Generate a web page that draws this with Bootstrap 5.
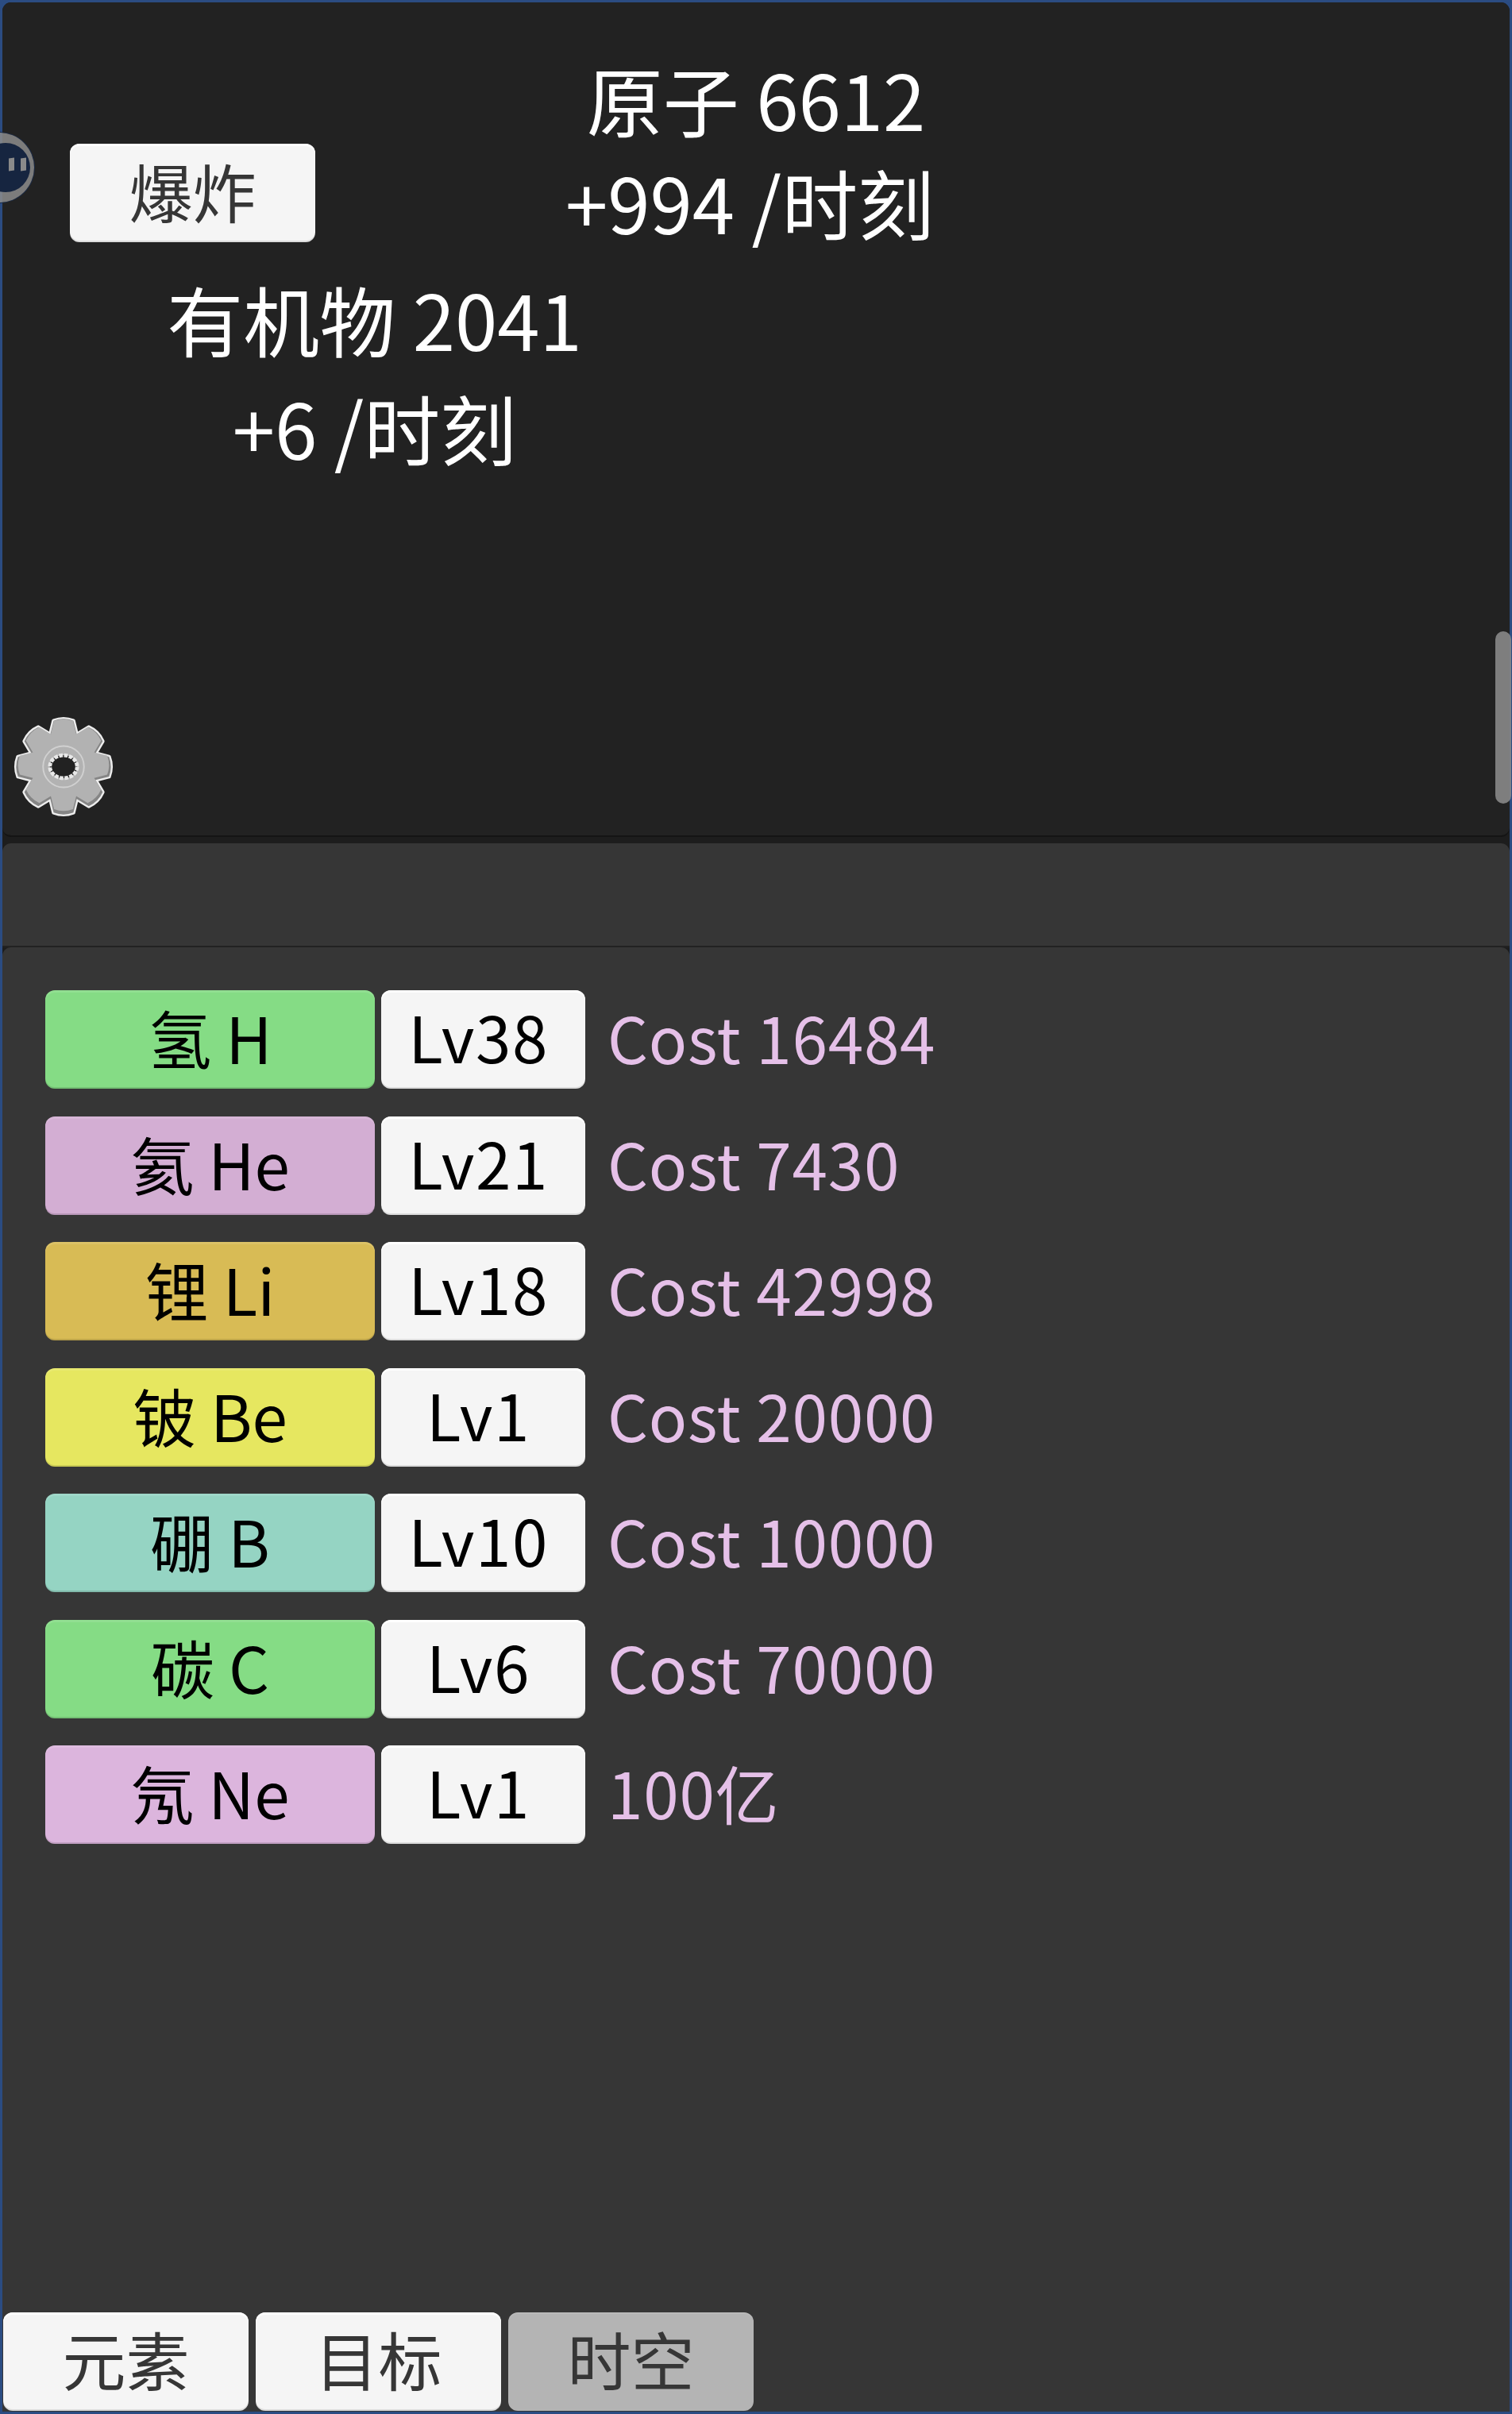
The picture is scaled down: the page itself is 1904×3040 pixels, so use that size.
<!DOCTYPE html>
<html lang="zh">
<head>
<meta charset="utf-8">
<title>原子</title>
<link href="https://cdn.jsdelivr.net/npm/bootstrap@5.3.0/dist/css/bootstrap.min.css" rel="stylesheet">
<style>
html,body{margin:0;height:3040px;overflow:hidden}
body{background:#2b4c82;font-family:"Noto Sans CJK SC","Noto Sans",sans-serif;color:#fff}
.shell{height:3040px;background:#1d1d1d;border:3px solid #2b4c82;border-radius:14px 14px 0 0;position:relative}
.stage{height:1051px;background:#222;border-radius:11px;border-bottom:2px solid #141414;position:relative}
.stage-row{display:flex;padding-top:56px}
.stage-left{width:937px;flex:none}
.stage-right{width:480px;flex:none;margin-left:-228px}
.stat{font-size:96px;line-height:130px;text-align:center;white-space:nowrap}
.stage-left .stat{line-height:137px}
.stage-right .stat-rate{padding-right:20px}
.ui-btn{font-size:80px;line-height:1;padding:0 0 8px;border:0;border-radius:12px;color:#363636;background:#f5f5f5;box-shadow:inset 0 3px 0 rgba(255,255,255,.85),inset 0 -2px 0 rgba(0,0,0,.1);display:flex;align-items:center;justify-content:center;flex:none}
.ui-btn:hover,.ui-btn:active{color:#363636;background:#f5f5f5}
.burst{width:309px;height:124px;margin:122px 0 27px 85px}
.blank{height:131px;margin-top:8px;background:#363636;border-radius:11px 11px 0 0;border-bottom:2px solid #222}
.main-panel{height:1844px;background:#363636;border-radius:11px 11px 0 0;position:relative;padding:54px 0 0 54px}
.el-row{display:flex;align-items:center;height:124px;margin-bottom:34.5px}
.el-name{width:415px;height:124px;box-shadow:inset 0 3px 0 rgba(255,255,255,.1),inset 0 -2px 0 rgba(0,0,0,.12)}
.el-name,.el-name:hover,.el-name:active,.el-lv,.el-lv:hover,.el-lv:active{color:#000}
.el-lv{width:257px;height:124px;margin-left:8px;padding-right:12px;padding-bottom:10px;letter-spacing:1.5px}
.el-cost{margin-left:28px;font-size:80px;line-height:116px;height:124px;color:#e5c0e8;white-space:nowrap;letter-spacing:.8px}
.c-green,.c-green:hover,.c-green:active{background:#85dc85}
.c-he,.c-he:hover,.c-he:active{background:#d3aed3}
.c-li,.c-li:hover,.c-li:active{background:#d8bb55}
.c-be,.c-be:hover,.c-be:active{background:#e6e760}
.c-b,.c-b:hover,.c-b:active{background:#95d4c3}
.c-ne,.c-ne:hover,.c-ne:active{background:#dcb5dd}
.tabbar{position:absolute;left:1px;bottom:1px;display:flex;gap:9px}
.tab-btn{width:309px;height:124px;padding-bottom:10px}
.tab-btn.off,.tab-btn.off:hover{background:#b4b4b4;box-shadow:inset 0 2px 0 rgba(255,255,255,.08);color:#363636}
.float-ball{position:absolute;left:-48px;top:164px;width:88px;height:88px;border-radius:50%;background:rgba(140,140,140,.85);box-shadow:0 0 0 1px #1a2a45;display:flex;align-items:center;justify-content:center;z-index:3}
.float-core{width:62px;height:62px;border-radius:50%;background:#162540;margin-left:15px;display:flex;align-items:center;justify-content:center;gap:8px;padding:0 0 8px 30px}
.float-core i{display:block;width:7px;height:16px;background:#8a8a8a;flex:none;transform:skewY(-8deg)}
.gear{position:absolute;left:14px;top:897px;width:126px;height:131px;display:block}
.thumb{position:absolute;right:-2px;top:792px;width:20px;height:217px;border-radius:10px;background:rgba(136,136,136,.9);z-index:3}
</style>
</head>
<body>
<div class="shell">
  <div class="stage">
    <div class="float-ball"><div class="float-core"><i></i><i></i></div></div>
    <div class="stage-row">
      <div class="stage-left">
        <button class="btn ui-btn burst" type="button">爆炸</button>
        <div class="stat">有机物 2041</div>
        <div class="stat">+6 /时刻</div>
      </div>
      <div class="stage-right">
        <div class="stat">原子 6612</div>
        <div class="stat stat-rate">+994 /时刻</div>
      </div>
    </div>
    <svg class="gear" viewBox="-66 -68 132 136" preserveAspectRatio="none" aria-hidden="true">
      <defs>
        <g id="gearshape">
          <circle r="45"/>
          <path id="geartooth" d="M-18-40-13-60Q0-65 13-60L18-40Z"/>
          <use href="#geartooth" transform="rotate(45)"/><use href="#geartooth" transform="rotate(90)"/><use href="#geartooth" transform="rotate(135)"/><use href="#geartooth" transform="rotate(180)"/><use href="#geartooth" transform="rotate(225)"/><use href="#geartooth" transform="rotate(270)"/><use href="#geartooth" transform="rotate(315)"/>
        </g>
      </defs>
      <use href="#gearshape" fill="#ededed" stroke="#ededed" stroke-width="5" stroke-linejoin="round"/>
      <use href="#gearshape" fill="#858585"/>
      <use href="#gearshape" fill="#b2b2b2" transform="translate(0 -2) scale(.96)"/>
      <circle r="27" fill="none" stroke="#d0d0d0" stroke-width="2"/>
      <ellipse rx="18" ry="15" fill="#222" stroke="#e8e8e8" stroke-width="5" stroke-dasharray="5 1.5"/>
    </svg>
    <div class="thumb"></div>
  </div>
  <div class="blank"></div>
  <div class="main-panel">
    <div class="el-row"><button class="btn ui-btn el-name c-green" type="button">氢 H</button><button class="btn ui-btn el-lv" type="button">Lv38</button><span class="el-cost">Cost 16484</span></div>
    <div class="el-row"><button class="btn ui-btn el-name c-he" type="button">氦 He</button><button class="btn ui-btn el-lv" type="button">Lv21</button><span class="el-cost">Cost 7430</span></div>
    <div class="el-row"><button class="btn ui-btn el-name c-li" type="button">锂 Li</button><button class="btn ui-btn el-lv" type="button">Lv18</button><span class="el-cost">Cost 42998</span></div>
    <div class="el-row"><button class="btn ui-btn el-name c-be" type="button">铍 Be</button><button class="btn ui-btn el-lv" type="button">Lv1</button><span class="el-cost">Cost 20000</span></div>
    <div class="el-row"><button class="btn ui-btn el-name c-b" type="button">硼 B</button><button class="btn ui-btn el-lv" type="button">Lv10</button><span class="el-cost">Cost 10000</span></div>
    <div class="el-row"><button class="btn ui-btn el-name c-green" type="button">碳 C</button><button class="btn ui-btn el-lv" type="button">Lv6</button><span class="el-cost">Cost 70000</span></div>
    <div class="el-row"><button class="btn ui-btn el-name c-ne" type="button">氖 Ne</button><button class="btn ui-btn el-lv" type="button">Lv1</button><span class="el-cost">100亿</span></div>
    <div class="tabbar">
      <button class="btn ui-btn tab-btn" type="button">元素</button>
      <button class="btn ui-btn tab-btn" type="button">目标</button>
      <button class="btn ui-btn tab-btn off" type="button">时空</button>
    </div>
  </div>
</div>
<script src="https://cdn.jsdelivr.net/npm/bootstrap@5.3.0/dist/js/bootstrap.bundle.min.js"></script>
</body>
</html>
